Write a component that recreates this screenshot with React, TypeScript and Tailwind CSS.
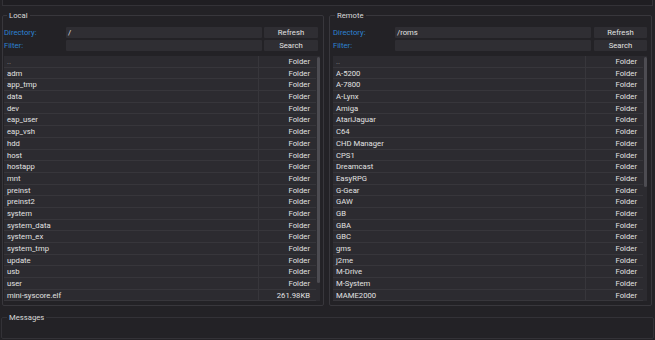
import { FC } from 'react';

type Row = { name: string; kind: string };

const localRows: Row[] = [
  { name: '..', kind: 'Folder' },
  ...['adm', 'app_tmp', 'data', 'dev', 'eap_user', 'eap_vsh', 'hdd', 'host', 'hostapp', 'mnt', 'preinst', 'preinst2', 'system', 'system_data', 'system_ex', 'system_tmp', 'update', 'usb', 'user'].map((n) => ({ name: n, kind: 'Folder' })),
  { name: 'mini-syscore.elf', kind: '261.98KB' },
];

const remoteRows: Row[] = [
  '..', 'A-5200', 'A-7800', 'A-Lynx', 'Amiga', 'AtariJaguar', 'C64', 'CHD Manager', 'CPS1', 'Dreamcast', 'EasyRPG', 'G-Gear', 'GAW', 'GB', 'GBA', 'GBC', 'gms', 'j2me', 'M-Drive', 'M-System', 'MAME2000',
].map((n) => ({ name: n, kind: 'Folder' }));

type PanelProps = {
  title: string;
  dir: string;
  rows: Row[];
  thumbHeight: number;
  wide?: boolean;
};

const Panel: FC<PanelProps> = ({ title, dir, rows, thumbHeight, wide }) => {
  return (
    <fieldset className={`border border-[#38373c] rounded-[2px] pb-[4px] ${wide ? 'w-[323px] pl-[3px] pr-[4px]' : 'w-[322px] pl-[1px] pr-[3px]'}`}>
      <legend className={`${wide ? 'ml-[2px]' : 'ml-[3px]'} px-[2px] text-[7.7px] leading-[9px] text-[#dadada]`}>{title}</legend>

      <div className="mt-[7px] flex flex-col gap-[2px]">
        <div className="flex items-center h-[11px]">
          <span className="w-[62px] text-[7.7px] text-[#2d83d3]">Directory:</span>
          <div className="w-[196px] h-full bg-[#2f2e33] rounded-[1px] pl-[2px] text-[7.7px] leading-[11px] text-[#e2e2e2]">{dir}</div>
          <div className={`${wide ? 'ml-[3px] w-[53px]' : 'ml-[2px] w-[54px]'} h-full bg-[#2f2e33] rounded-[1px] text-center text-[7.7px] leading-[11px] text-[#e2e2e2]`}>Refresh</div>
        </div>
        <div className="flex items-center h-[11px]">
          <span className="w-[62px] text-[7.7px] text-[#2d83d3]">Filter:</span>
          <div className="w-[196px] h-full bg-[#2f2e33] rounded-[1px]" />
          <div className={`${wide ? 'ml-[3px] w-[53px]' : 'ml-[2px] w-[54px]'} h-full bg-[#2f2e33] rounded-[1px] text-center text-[7.7px] leading-[11px] text-[#e2e2e2]`}>Search</div>
        </div>
      </div>

      <div className="mt-[5px] flex bg-[#2c2b30]">
        <div className="flex-1 flex flex-col">
          {rows.map((r, i) => (
            <div key={i} className="flex h-[11.7px] border-b border-[#37363b] text-[7.7px] leading-[11.7px]">
              <span className={`flex-1 pl-[3px] ${r.name === '..' ? 'text-[#8c8c8c]' : 'text-[#e2e2e2]'}`}>{r.name}</span>
              <span className="w-[58px] border-l border-[#37363b] pr-[6px] text-right text-[#e2e2e2]">{r.kind}</span>
            </div>
          ))}
        </div>
        <div className="w-[4px] pt-[1px] pl-[0.5px] pr-[0.5px]">
          <div className="w-[3px] rounded-[2px] bg-[#4d4c52]" style={{ height: thumbHeight }} />
        </div>
      </div>
    </fieldset>
  );
};

const App: FC = () => {
  return (
    <div className="w-[655px] h-[340px] overflow-hidden bg-[#232226] font-['Roboto',sans-serif]">
      <div className="h-[6px] mx-[2px] bg-[#1f1e22] border-b border-x border-[#333237]" />

      <div className="mt-[5px] flex pl-[2px] gap-[5px]">
        <Panel title="Local" dir="/" rows={localRows} thumbHeight={226} />
        <Panel title="Remote" dir="/roms" rows={remoteRows} thumbHeight={130} wide />
      </div>

      <fieldset className="mt-[7px] mx-[1px] h-[26px] border border-[#333237] rounded-[2px]">
        <legend className="ml-[5px] px-[2px] text-[7.7px] leading-[9px] text-[#dadada]">Messages</legend>
      </fieldset>
    </div>
  );
};

export default App;
